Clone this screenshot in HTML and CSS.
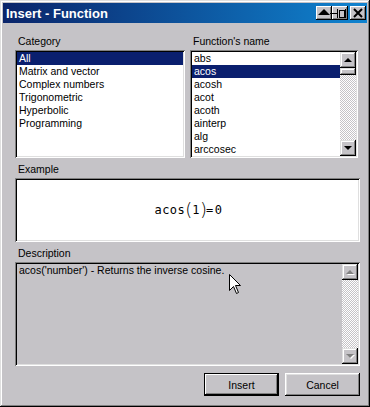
FILE: index.html
```html
<!DOCTYPE html>
<html lang="en">

<head>
    <meta charset="UTF-8">
    <link rel="stylesheet" href="styles.css">
    <title>Insert - Function</title>
</head>

<body>

    <div class="window">
        <div class="titlebar">
            <span class="title">Insert - Function</span>
            <div class="title_buttons">
                <div class="pair">
                    <button class="tbtn">
                        <svg width="16" height="14" viewBox="0 0 16 14">
                            <polygon points="2,9 8,3 14,9" fill="#000" />
                            <rect x="14" y="7" width="2" height="1" fill="#000" />
                        </svg>
                    </button>
                    <button class="tbtn">
                        <svg width="16" height="14" viewBox="0 0 16 14">
                            <rect x="0" y="7" width="5" height="1" fill="#000" />
                            <rect x="5" y="3" width="1" height="9" fill="#000" />
                            <rect x="7" y="4" width="5" height="7" fill="none" stroke="#000" stroke-width="1" transform="translate(0.5 0.5)" />
                            <rect x="13" y="3" width="1" height="9" fill="#000" />
                        </svg>
                    </button>
                </div>
                <button class="tbtn">
                    <svg width="16" height="14" viewBox="0 0 16 14">
                        <path d="M4 3 L12 11 M12 3 L4 11" stroke="#000" stroke-width="2" />
                    </svg>
                </button>
            </div>
        </div>

        <div class="content">
            <div class="lists">
                <div class="col">
                    <div class="label">Category</div>
                    <div class="listbox">
                        <ul class="items">
                            <li class="item selected">All</li>
                            <li class="item">Matrix and vector</li>
                            <li class="item">Complex numbers</li>
                            <li class="item">Trigonometric</li>
                            <li class="item">Hyperbolic</li>
                            <li class="item">Programming</li>
                        </ul>
                    </div>
                </div>
                <div class="col">
                    <div class="label">Function's name</div>
                    <div class="listbox">
                        <ul class="items">
                            <li class="item">abs</li>
                            <li class="item selected">acos</li>
                            <li class="item">acosh</li>
                            <li class="item">acot</li>
                            <li class="item">acoth</li>
                            <li class="item">ainterp</li>
                            <li class="item">alg</li>
                            <li class="item">arccosec</li>
                        </ul>
                        <div class="scrollbar">
                            <div class="sbtn"><span class="arrow_up"></span></div>
                            <div class="thumb"></div>
                            <div class="track"></div>
                            <div class="sbtn"><span class="arrow_down"></span></div>
                        </div>
                    </div>
                </div>
            </div>

            <div class="label label_gap">Example</div>
            <div class="example">
                <span class="formula">acos<span class="paren">(</span>1<span class="paren">)</span><span class="eq">=</span>0</span>
            </div>

            <div class="label label_gap">Description</div>
            <div class="description">
                <p class="desc_text">acos('number') - Returns the inverse cosine.</p>
                <div class="scrollbar">
                    <div class="sbtn"><span class="arrow_up off"></span></div>
                    <div class="track"></div>
                    <div class="sbtn"><span class="arrow_down off"></span></div>
                </div>
                <svg class="cursor" width="13" height="21" viewBox="0 0 13 21">
                    <polygon points="0.5,0.5 0.5,16.5 4.5,12.5 7.5,19.5 9.5,18.5 6.5,11.5 11.5,11.5" fill="#fff" stroke="#000" stroke-width="1" />
                </svg>
            </div>

            <div class="buttons">
                <button class="btn default">Insert</button>
                <button class="btn">Cancel</button>
            </div>
        </div>
    </div>

</body>

</html>
```

FILE: styles.css
```css
* {
    margin: 0px;
    padding: 0px;
    box-sizing: border-box;
}

body {
    background: #c5c3c7;
    font-family: "Liberation Sans", Arial, sans-serif;
    font-size: 10.5px;
    color: #000000;
}

.window {
    width: 370px;
    height: 407px;
    padding: 3px;
    background: #c5c3c7;
    display: flex;
    flex-direction: column;
    box-shadow: inset -1px -1px #000000, inset 1px 1px #dfdfdf, inset -2px -2px #808080, inset 2px 2px #ffffff;
}

.titlebar {
    height: 20px;
    display: flex;
    align-items: center;
    justify-content: space-between;
    padding: 0px 1px 0px 3px;
    background: linear-gradient(to right, #0a246a, #1084d0);
}

.title {
    color: #ffffff;
    font-weight: bold;
    font-size: 13px;
}

.title_buttons {
    display: flex;
    gap: 2px;
}

.pair {
    display: flex;
}

.tbtn {
    width: 16px;
    height: 14px;
    border: none;
    background: #c5c3c7;
    display: flex;
    align-items: center;
    justify-content: center;
    box-shadow: inset -1px -1px #000000, inset 1px 1px #ffffff, inset -2px -2px #808080;
}

.content {
    display: flex;
    flex-direction: column;
    padding: 12px 7px 0px 12px;
}

.lists {
    display: grid;
    grid-template-columns: 170px 168px;
    gap: 5px;
}

.label {
    line-height: 13px;
    height: 13px;
    padding-left: 3px;
    margin-bottom: 2px;
}

.label_gap {
    margin-top: 5px;
}

.listbox {
    height: 108px;
    padding: 2px;
    background: #ffffff;
    display: flex;
    box-shadow: inset 1px 1px #808080, inset -1px -1px #ffffff, inset 2px 2px #000000, inset -2px -2px #dfdfdf;
}

.items {
    list-style: none;
    flex: 1;
}

.item {
    height: 13px;
    line-height: 13px;
    padding-left: 2px;
    white-space: nowrap;
}

.selected {
    background: #0a1f6e;
    color: #ffffff;
}

.scrollbar {
    width: 16px;
    display: flex;
    flex-direction: column;
}

.sbtn {
    width: 16px;
    height: 16px;
    background: #c5c3c7;
    display: flex;
    align-items: center;
    justify-content: center;
    box-shadow: inset -1px -1px #000000, inset 1px 1px #dfdfdf, inset -2px -2px #808080, inset 2px 2px #ffffff;
}

.thumb {
    width: 16px;
    height: 7px;
    background: #c5c3c7;
    box-shadow: inset -1px -1px #000000, inset 1px 1px #dfdfdf, inset -2px -2px #808080, inset 2px 2px #ffffff;
}

.track {
    flex: 1;
    background: repeating-conic-gradient(#c5c3c7 0% 25%, #ffffff 0% 50%) 0 0 / 2px 2px;
}

.arrow_up {
    width: 0px;
    height: 0px;
    border-left: 4px solid transparent;
    border-right: 4px solid transparent;
    border-bottom: 4px solid #000000;
}

.arrow_down {
    width: 0px;
    height: 0px;
    border-left: 4px solid transparent;
    border-right: 4px solid transparent;
    border-top: 4px solid #000000;
}

.arrow_up.off {
    border-bottom-color: #808080;
    filter: drop-shadow(1px 1px 0px #ffffff);
}

.arrow_down.off {
    border-top-color: #808080;
    filter: drop-shadow(1px 1px 0px #ffffff);
}

.example {
    height: 64px;
    background: #ffffff;
    display: flex;
    align-items: center;
    justify-content: center;
    box-shadow: inset 1px 1px #808080, inset -1px -1px #ffffff, inset 2px 2px #000000, inset -2px -2px #dfdfdf;
}

.formula {
    font-family: "DejaVu Sans Mono", monospace;
    font-size: 12px;
    letter-spacing: 0.5px;
    display: flex;
    align-items: center;
    padding-left: 2px;
}

.paren {
    font-family: "DejaVu Sans", sans-serif;
    font-size: 18px;
    font-weight: 200;
    letter-spacing: 0px;
    position: relative;
    top: -1px;
}

.eq {
    margin: 0px 1px 0px -1px;
}

.description {
    position: relative;
    height: 104px;
    padding: 2px;
    display: flex;
    box-shadow: inset 1px 1px #808080, inset -1px -1px #ffffff, inset 2px 2px #000000, inset -2px -2px #dfdfdf;
}

.desc_text {
    flex: 1;
    line-height: 13px;
    padding-left: 2px;
}

.cursor {
    position: absolute;
    left: 214px;
    top: 12px;
}

.buttons {
    display: flex;
    justify-content: flex-end;
    gap: 6px;
    margin-top: 7px;
}

.btn {
    width: 75px;
    height: 23px;
    border: none;
    background: #c5c3c7;
    font-family: "Liberation Sans", Arial, sans-serif;
    font-size: 10.5px;
    color: #000000;
    box-shadow: inset -1px -1px #000000, inset 1px 1px #ffffff, inset -2px -2px #808080, inset 2px 2px #dfdfdf;
}

.default {
    box-shadow: inset 0px 0px 0px 1px #000000, inset -2px -2px #000000, inset 2px 2px #ffffff, inset -3px -3px #808080;
}
```
